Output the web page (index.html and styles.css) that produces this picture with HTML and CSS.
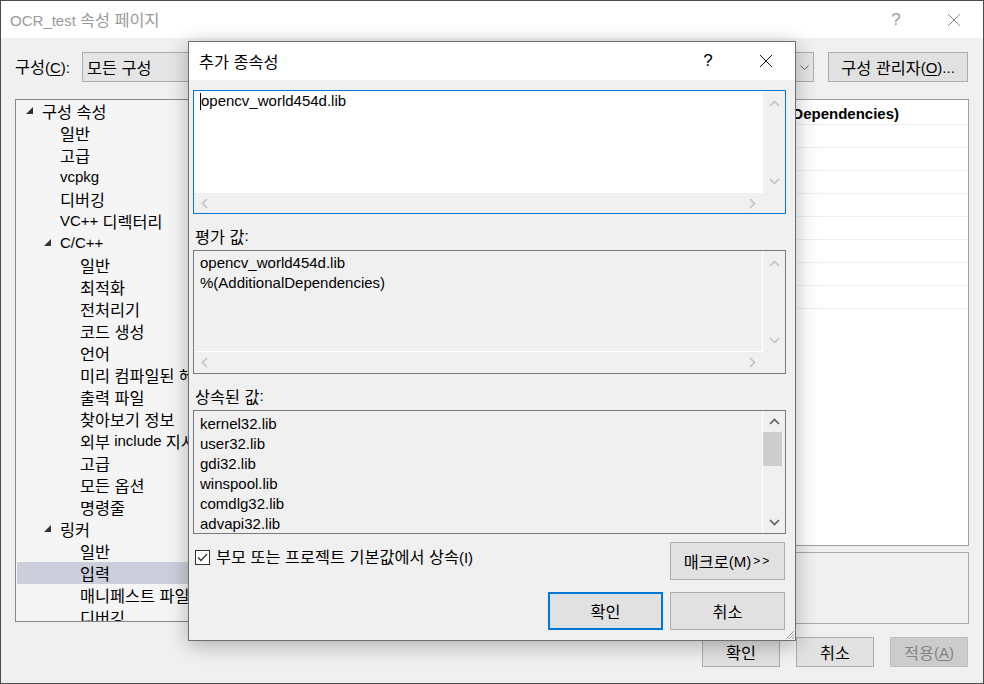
FILE: index.html
```html
<!DOCTYPE html>
<html lang="ko">
<head>
<meta charset="utf-8">
<title>OCR_test 속성 페이지</title>
<link rel="stylesheet" href="styles.css">
</head>
<body>
<div class="window">
  <div class="titlebar">
    <span class="title">OCR_test <span class="k">속성 페이지</span></span>
    <span class="tb-btn help">?</span>
    <span class="tb-btn"><svg width="14" height="14" viewBox="0 0 14 14"><path d="M1 1L13 13M13 1L1 13" class="x-grey"/></svg></span>
  </div>
  <div class="content">
    <div class="config-row">
      <span class="cfg-label"><span class="k">구성</span>(<u>C</u>):</span>
      <div class="combo">
        <span class="combo-text k">모든 구성</span>
        <span class="combo-arrow"><svg width="9" height="5" viewBox="0 0 9 5"><path d="M0.5 0.5L4.5 4.5L8.5 0.5" class="chev-thin"/></svg></span>
      </div>
      <button class="btn cfg-mgr"><span class="k">구성 관리자</span>(<u>O</u>)...</button>
    </div>
    <div class="main">
      <div class="tree">
        <div class="row lv0"><span class="tw"><svg width="7" height="7" viewBox="0 0 7 7"><polygon points="7,0 7,7 0,7"/></svg></span><span class="k">구성 속성</span></div>
        <div class="row lv1"><span class="tw"></span><span class="k">일반</span></div>
        <div class="row lv1"><span class="tw"></span><span class="k">고급</span></div>
        <div class="row lv1"><span class="tw"></span>vcpkg</div>
        <div class="row lv1"><span class="tw"></span><span class="k">디버깅</span></div>
        <div class="row lv1"><span class="tw"></span>VC++&nbsp;<span class="k">디렉터리</span></div>
        <div class="row lv1t"><span class="tw"><svg width="7" height="7" viewBox="0 0 7 7"><polygon points="7,0 7,7 0,7"/></svg></span>C/C++</div>
        <div class="row lv2"><span class="tw"></span><span class="k">일반</span></div>
        <div class="row lv2"><span class="tw"></span><span class="k">최적화</span></div>
        <div class="row lv2"><span class="tw"></span><span class="k">전처리기</span></div>
        <div class="row lv2"><span class="tw"></span><span class="k">코드 생성</span></div>
        <div class="row lv2"><span class="tw"></span><span class="k">언어</span></div>
        <div class="row lv2"><span class="tw"></span><span class="k">미리 컴파일된 헤더</span></div>
        <div class="row lv2"><span class="tw"></span><span class="k">출력 파일</span></div>
        <div class="row lv2"><span class="tw"></span><span class="k">찾아보기 정보</span></div>
        <div class="row lv2"><span class="tw"></span><span class="k">외부</span>&nbsp;include&nbsp;<span class="k">지시문</span></div>
        <div class="row lv2"><span class="tw"></span><span class="k">고급</span></div>
        <div class="row lv2"><span class="tw"></span><span class="k">모든 옵션</span></div>
        <div class="row lv2"><span class="tw"></span><span class="k">명령줄</span></div>
        <div class="row lv1t"><span class="tw"><svg width="7" height="7" viewBox="0 0 7 7"><polygon points="7,0 7,7 0,7"/></svg></span><span class="k">링커</span></div>
        <div class="row lv2"><span class="tw"></span><span class="k">일반</span></div>
        <div class="row lv2 selected"><span class="tw"></span><span class="k">입력</span></div>
        <div class="row lv2"><span class="tw"></span><span class="k">매니페스트 파일</span></div>
        <div class="row lv2"><span class="tw"></span><span class="k">디버깅</span></div>
      </div>
      <div class="right">
        <div class="grid">
          <div class="grow first"><span class="gval">opencv_world454d.lib;%(AdditionalDependencies)</span></div>
          <div class="grow"></div>
          <div class="grow"></div>
          <div class="grow"></div>
          <div class="grow"></div>
          <div class="grow"></div>
          <div class="grow"></div>
          <div class="grow"></div>
          <div class="grow"></div>
        </div>
        <div class="desc"></div>
      </div>
    </div>
    <div class="footer">
      <button class="btn fbtn"><span class="k">확인</span></button>
      <button class="btn fbtn"><span class="k">취소</span></button>
      <button class="btn fbtn disabled"><span class="k">적용</span>(<u>A</u>)</button>
    </div>
  </div>

  <div class="dialog">
    <div class="d-titlebar">
      <span class="d-title k">추가 종속성</span>
      <span class="tb-btn d-help">?</span>
      <span class="tb-btn"><svg width="14" height="14" viewBox="0 0 14 14"><path d="M1 1L13 13M13 1L1 13" class="x-dark"/></svg></span>
    </div>
    <div class="d-body">
      <div class="box edit">
        <div class="box-content white"><span class="caret"></span>opencv_world454d.lib</div>
        <div class="vscroll">
          <svg class="arr" width="11" height="7" viewBox="0 0 11 7"><path d="M1 6L5.5 1.5L10 6"/></svg>
          <svg class="arr" width="11" height="7" viewBox="0 0 11 7"><path d="M1 1L5.5 5.5L10 1"/></svg>
        </div>
        <div class="hscroll">
          <svg class="arr" width="7" height="11" viewBox="0 0 7 11"><path d="M6 1L1.5 5.5L6 10"/></svg>
          <svg class="arr" width="7" height="11" viewBox="0 0 7 11"><path d="M1 1L5.5 5.5L1 10"/></svg>
        </div>
        <div class="corner"></div>
      </div>

      <div class="d-label"><span class="k">평가 값</span>:</div>
      <div class="box eval">
        <div class="box-content sep-rb">
          <div class="line">opencv_world454d.lib</div>
          <div class="line">%(AdditionalDependencies)</div>
        </div>
        <div class="vscroll">
          <svg class="arr" width="11" height="7" viewBox="0 0 11 7"><path d="M1 6L5.5 1.5L10 6"/></svg>
          <svg class="arr" width="11" height="7" viewBox="0 0 11 7"><path d="M1 1L5.5 5.5L10 1"/></svg>
        </div>
        <div class="hscroll">
          <svg class="arr" width="7" height="11" viewBox="0 0 7 11"><path d="M6 1L1.5 5.5L6 10"/></svg>
          <svg class="arr" width="7" height="11" viewBox="0 0 7 11"><path d="M1 1L5.5 5.5L1 10"/></svg>
        </div>
        <div class="corner"></div>
      </div>

      <div class="d-label"><span class="k">상속된 값</span>:</div>
      <div class="box inherit">
        <div class="box-content sep-r">
          <div class="line">kernel32.lib</div>
          <div class="line">user32.lib</div>
          <div class="line">gdi32.lib</div>
          <div class="line">winspool.lib</div>
          <div class="line">comdlg32.lib</div>
          <div class="line">advapi32.lib</div>
        </div>
        <div class="vscroll3">
          <span class="sbtn"><svg class="arr on" width="11" height="7" viewBox="0 0 11 7"><path d="M1 6L5.5 1.5L10 6"/></svg></span>
          <span class="thumb"></span>
          <span class="track"></span>
          <span class="sbtn"><svg class="arr on" width="11" height="7" viewBox="0 0 11 7"><path d="M1 1L5.5 5.5L10 1"/></svg></span>
        </div>
      </div>

      <div class="check-row">
        <label class="chk">
          <span class="chkbox"><svg width="13" height="13" viewBox="0 0 13 13"><path d="M2 6.5L5 9.5L11 3"/></svg></span>
          <span><span class="k">부모 또는 프로젝트 기본값에서 상속</span>(I)</span>
        </label>
        <button class="btn dbtn"><span class="k">매크로</span>(M)<span class="gt">&gt;&gt;</span></button>
      </div>
      <div class="d-buttons">
        <button class="btn dbtn default"><span class="k">확인</span></button>
        <button class="btn dbtn"><span class="k">취소</span></button>
      </div>
    </div>
    <svg class="grip" width="11" height="11" viewBox="0 0 11 11"><path d="M10 2L2 10M10 5L5 10M10 8L8 10"/></svg>
  </div>
</div>
</body>
</html>
```
FILE: styles.css
```css
* { box-sizing: border-box; }
html, body { margin: 0; padding: 0; }
body {
  width: 984px;
  height: 684px;
  overflow: hidden;
  background: #ffffff;
  font-family: "Liberation Sans", "Noto Sans CJK KR", sans-serif;
  font-size: 15px;
  color: #000;
}
button { font: inherit; color: inherit; margin: 0; padding: 0; }
u { text-decoration: underline; text-underline-offset: 2px; }

/* Korean runs: Hangul glyphs drawn a bit larger to match the UI font's width */
.k {
  font-family: "Noto Sans CJK KR", sans-serif;
  font-size: 16.3px;
  line-height: 1;
}

.window {
  position: relative;
  width: 984px;
  height: 684px;
  border: 1px solid #4d4d4d;
  background: #f0f0f0;
  display: flex;
  flex-direction: column;
}

.titlebar {
  flex: none;
  height: 37px;
  background: #fff;
  display: flex;
  align-items: center;
  padding-left: 9px;
  color: #9a9a9a;
}
.title { flex: 1; }
.tb-btn {
  width: 58px;
  height: 100%;
  display: flex;
  align-items: center;
  justify-content: center;
}
.help { font-size: 17px; color: #9a9a9a; }
.x-grey { stroke: #8a8a8a; stroke-width: 1; fill: none; }
.x-dark { stroke: #111; stroke-width: 1; fill: none; }

.content {
  flex: 1;
  display: flex;
  flex-direction: column;
  padding: 14px 14px 16px 14px;
}

.config-row {
  height: 30px;
  display: flex;
  align-items: center;
}
.cfg-label { width: 67px; }
.combo {
  width: 732px;
  height: 30px;
  background: #e5e5e5;
  border: 1px solid #acacac;
  display: flex;
  align-items: center;
}
.combo-text { flex: 1; padding-left: 4px; }
.combo-arrow {
  width: 18px;
  height: 100%;
  display: flex;
  align-items: center;
  justify-content: center;
}
.chev-thin { fill: none; stroke: #606060; stroke-width: 1; }
.btn {
  background: #e1e1e1;
  border: 1px solid #adadad;
  display: flex;
  align-items: center;
  justify-content: center;
}
.cfg-mgr {
  margin-left: 14px;
  width: 140px;
  height: 30px;
}

.main {
  margin-top: 17px;
  height: 525px;
  display: flex;
  gap: 6px;
}
.tree {
  width: 234px;
  height: 523px;
  border: 1px solid #828790;
  background: #f5f5f5;
  overflow: hidden;
  padding: 0 1px;
}
.row {
  height: 22px;
  line-height: 22px;
  display: flex;
  align-items: center;
  white-space: nowrap;
}
.tw {
  width: 16px;
  flex: none;
  display: flex;
  align-items: center;
}
.tw svg { fill: #333; margin-top: -1px; }
.lv0 { padding-left: 9px; }
.lv1 { padding-left: 25px; }
.lv1t { padding-left: 27px; }
.lv2 { padding-left: 47px; }
.lv1 .tw { width: 18px; }
.selected { background: #cccedb; }

.right {
  flex: 1;
  display: flex;
  flex-direction: column;
  gap: 6px;
}
.grid {
  height: 447px;
  background: #fff;
  border: 1px solid #a0a0a0;
}
.grow {
  height: 23px;
  border-bottom: 1px solid #edeff3;
  display: flex;
  align-items: center;
}
.grow.first { height: 25px; font-weight: bold; padding-top: 3px; }
.gval {
  flex: 1;
  display: flex;
  justify-content: flex-end;
  overflow: hidden;
  white-space: nowrap;
  padding-right: 69px;
}
.desc {
  flex: 1;
  border: 1px solid #a8a8a8;
  background: #f0f0f0;
}

.footer {
  margin-top: 13px;
  display: flex;
  justify-content: flex-end;
  gap: 16px;
  padding-right: 1px;
}
.fbtn { width: 78px; height: 30px; }
.fbtn.disabled { background: #cccccc; border-color: #bfbfbf; color: #838383; }

/* dialog */
.dialog {
  position: absolute;
  left: 187px;
  top: 40px;
  width: 608px;
  height: 600px;
  border: 1px solid #6f6f6f;
  background: #f0f0f0;
  box-shadow: 0 4px 20px rgba(0, 0, 0, 0.28);
  display: flex;
  flex-direction: column;
}
.d-titlebar {
  height: 38px;
  background: #fff;
  display: flex;
  align-items: center;
  padding-left: 10px;
}
.d-title { flex: 1; }
.d-help { font-size: 17px; }

.d-body {
  padding: 10px 9px 0 4px;
  display: flex;
  flex-direction: column;
}
.box {
  width: 593px;
  height: 124px;
  border: 1px solid #7a7a7a;
  display: grid;
  grid-template-columns: 1fr 22px;
  grid-template-rows: 1fr 21px;
}
.box.edit { border-color: #0078d7; grid-template-rows: 1fr 20px; }
.box.inherit { grid-template-rows: 1fr; }
.box-content {
  padding: 2px 6px 0 6px;
  line-height: 20px;
  white-space: nowrap;
  overflow: hidden;
  background: #f0f0f0;
}
.box-content.white { background: #fff; padding-top: 0; }
.sep-rb { border-right: 1px solid #fff; border-bottom: 1px solid #fff; }
.sep-r { border-right: 1px solid #fff; padding-top: 3px; }
.caret {
  display: inline-block;
  width: 1px;
  height: 17px;
  background: #000;
  vertical-align: -4px;
}
.vscroll {
  background: #f0f0f0;
  display: flex;
  flex-direction: column;
  justify-content: space-between;
  align-items: center;
  padding: 9px 0 8px 0;
}
.hscroll {
  background: #f0f0f0;
  display: flex;
  justify-content: space-between;
  align-items: center;
  padding: 0 7px;
}
.corner { background: #f0f0f0; }
.arr path { fill: none; stroke: #c4c4c4; stroke-width: 1.7; }
.arr.on path { stroke: #606060; }

.vscroll3 {
  background: #f0f0f0;
  display: flex;
  flex-direction: column;
}
.sbtn {
  height: 21px;
  display: flex;
  align-items: center;
  justify-content: center;
}
.thumb {
  height: 34px;
  width: 19px;
  background: #cdcdcd;
}
.track { flex: 1; }

.d-label {
  margin-top: 12px;
  height: 24px;
  line-height: 20px;
  padding-left: 2px;
  display: flex;
  align-items: center;
  padding-bottom: 4px;
}

.check-row {
  margin-top: 8px;
  display: flex;
  justify-content: space-between;
  align-items: flex-start;
  padding-right: 1px;
}
.chk {
  margin-top: 6px;
  display: flex;
  align-items: center;
  gap: 6px;
  padding-left: 2px;
  line-height: 16px;
}
.chkbox {
  width: 15px;
  height: 15px;
  border: 1px solid #333;
  background: #fff;
  display: flex;
  align-items: center;
  justify-content: center;
}
.chkbox path { fill: none; stroke: #333; stroke-width: 1.3; }
.dbtn { width: 115px; height: 38px; }
.gt { font-size: 12px; letter-spacing: 2px; margin-left: 2px; }
.d-buttons {
  margin-top: 12px;
  display: flex;
  justify-content: flex-end;
  gap: 7px;
  padding-right: 1px;
}
.dbtn.default { border: 2px solid #0078d7; }
.grip {
  position: absolute;
  right: 0;
  bottom: 0;
}
.grip path { stroke: #a0a0a0; stroke-width: 1; fill: none; }
```
